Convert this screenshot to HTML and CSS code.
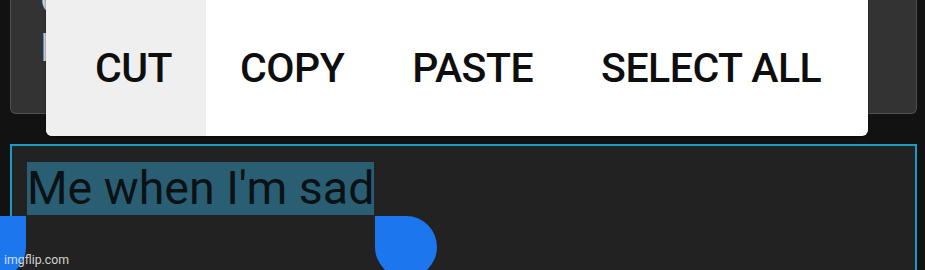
FILE: index.html
```html
<!DOCTYPE html>
<html lang="en">
<head>
    <meta charset="UTF-8">
    <meta name="viewport" content="width=device-width, initial-scale=1.0">
    <title>Text selection</title>
    <link rel="stylesheet" href="styles.css">
</head>
<body>
    <div class="screen">
        <div class="note-card">
            <div class="note-text">
                <div>Copy</div>
                <div>Is it okay</div>
            </div>
        </div>

        <div class="text-field">
            <span class="selected">Me when I'm sad</span>
        </div>

        <!-- floating toolbar over the card -->
        <div class="action-menu">
            <div class="action active">CUT</div>
            <div class="action">COPY</div>
            <div class="action">PASTE</div>
            <div class="action">SELECT ALL</div>
        </div>

        <div class="handle handle-left"></div>
        <div class="handle handle-right"></div>

        <div class="watermark">imgflip.com</div>
    </div>
</body>
</html>
```

FILE: styles.css
```css
* {
    box-sizing: border-box;
    margin: 0;
    padding: 0;
}

body {
    background: #121212;
    font-family: Roboto, "Noto Sans", sans-serif;
    overflow: hidden;
}

.screen {
    position: relative;
    width: 925px;
    height: 270px;
    overflow: hidden;
    padding: 0 8px 0 10px;
}

.note-card {
    height: 114px;
    background: #333333;
    border: 1px solid #505050;
    border-top: none;
    border-radius: 0 0 6px 6px;
    overflow: hidden;
    padding-left: 29px;
}

.note-text {
    margin-top: -24px;
    font-size: 39px;
    line-height: 48px;
    color: #cfcfcf;
    white-space: nowrap;
}

.text-field {
    margin-top: 30px;
    height: 160px;
    background: #222222;
    border: 2px solid #1b9cc6;
    border-bottom: none;
    padding: 16px 15px 0;
}

.selected {
    display: inline-block;
    background: #2a5f73;
    color: #0a1216;
    font-size: 46.5px;
    line-height: 53px;
}

.action-menu {
    position: absolute;
    top: -10px;
    left: 46px;
    width: 822px;
    height: 146px;
    background: #ffffff;
    border-radius: 6px;
    box-shadow: 0 1px 2px rgba(0, 0, 0, 0.6);
    display: flex;
    align-items: stretch;
    overflow: hidden;
    padding-top: 10px;
}

.action {
    display: flex;
    align-items: center;
    padding: 0 34px;
    font-size: 41px;
    font-weight: 500;
    color: #0e0e0e;
    letter-spacing: -0.5px;
    white-space: nowrap;
}

.action.active {
    background: #efefef;
    padding-left: 49px;
}

.handle {
    position: absolute;
    top: 216px;
    width: 62px;
    height: 62px;
    background: #1c77ee;
}

.handle-left {
    left: -36px;
    border-radius: 50% 0 50% 50%;
}

.handle-right {
    left: 375px;
    border-radius: 0 50% 50% 50%;
}

.watermark {
    position: absolute;
    left: 4px;
    bottom: 3px;
    font-size: 12.3px;
    color: rgba(255, 255, 255, 0.8);
}
```
